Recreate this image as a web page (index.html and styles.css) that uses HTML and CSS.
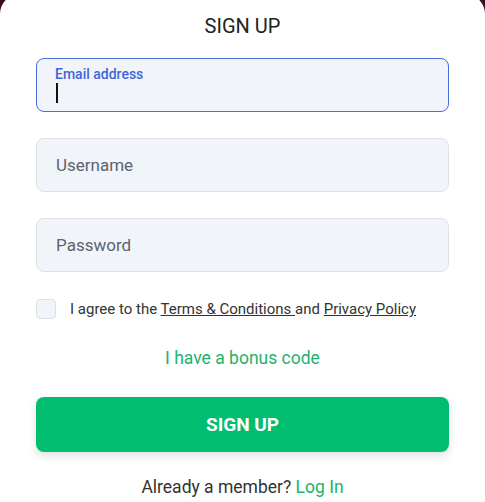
FILE: index.html
```html
<!DOCTYPE html>
<html lang="en">
<head>
<meta charset="utf-8">
<title>Sign up</title>
<link rel="stylesheet" href="styles.css">
</head>
<body>
<main class="card">
  <h1 class="title">SIGN UP</h1>
  <form class="form">
    <div class="field field-active">
      <span class="field-label">Email address</span>
      <span class="caret"></span>
    </div>
    <div class="field"><span class="placeholder">Username</span></div>
    <div class="field"><span class="placeholder">Password</span></div>
    <label class="agree">
      <span class="checkbox"></span>
      <span class="agree-text">I agree to the <a class="link" href="#">Terms &amp; Conditions </a>and <a class="link" href="#">Privacy Policy</a></span>
    </label>
    <a class="bonus" href="#">I have a bonus code</a>
    <button class="submit" type="button">SIGN UP</button>
    <p class="member">Already a member? <a class="login" href="#">Log In</a></p>
  </form>
</main>
</body>
</html>
```

FILE: styles.css
```css
* { box-sizing: border-box; }
html, body { margin: 0; padding: 0; }
body {
  background: #3a0c25;
  font-family: Roboto, "Noto Sans", "Liberation Sans", sans-serif;
  height: 502px;
  overflow: hidden;
}
.card {
  background: #ffffff;
  margin-top: -6px;
  border-radius: 20px 20px 0 0;
  padding: 20px 36px 10px;
  height: 508px;
}
.title {
  margin: 0;
  font-size: 20px;
  line-height: 24px;
  font-weight: 400;
  color: #222222;
  text-align: center;
}
.form {
  margin-top: 20px;
  display: flex;
  flex-direction: column;
}
.field {
  height: 54px;
  border: 1px solid #dde1e7;
  border-radius: 8px;
  background: #f1f5f9;
  padding: 0 19px;
  display: flex;
  align-items: center;
  margin-bottom: 26px;
}
.field-active {
  border-color: #4a6ddc;
  flex-direction: column;
  align-items: flex-start;
  padding-top: 7px;
}
.field-label {
  font-size: 14px;
  line-height: 16px;
  font-weight: 500;
  color: #4065dc;
  margin-left: -1px;
}
.caret {
  display: block;
  width: 2px;
  height: 20px;
  background: #111111;
  margin-top: 1px;
}
.placeholder {
  font-size: 17px;
  color: #5b6370;
}
.agree {
  display: flex;
  align-items: center;
  gap: 14px;
  margin-top: 1px;
  height: 20px;
}
.checkbox {
  width: 20px;
  height: 20px;
  border: 1px solid #dde1e7;
  border-radius: 4px;
  background: #f1f5f9;
  flex: none;
}
.agree-text {
  font-size: 15px;
  color: #333333;
}
.link {
  color: #333333;
  text-decoration: underline;
}
.bonus {
  margin-top: 29px;
  align-self: center;
  font-size: 17.5px;
  line-height: 20px;
  color: #1eb36c;
  text-decoration: none;
}
.submit {
  margin-top: 29px;
  height: 55px;
  border: 0;
  border-radius: 8px;
  background: #00bd6f;
  color: #ffffff;
  font-family: inherit;
  font-size: 19px;
  font-weight: 700;
  box-shadow: 0 4px 10px rgba(0, 0, 0, 0.12);
}
.member {
  margin: 25px 0 0;
  text-align: center;
  font-size: 17.5px;
  line-height: 20px;
  color: #333333;
}
.login {
  color: #1eb36c;
  text-decoration: none;
}
```
